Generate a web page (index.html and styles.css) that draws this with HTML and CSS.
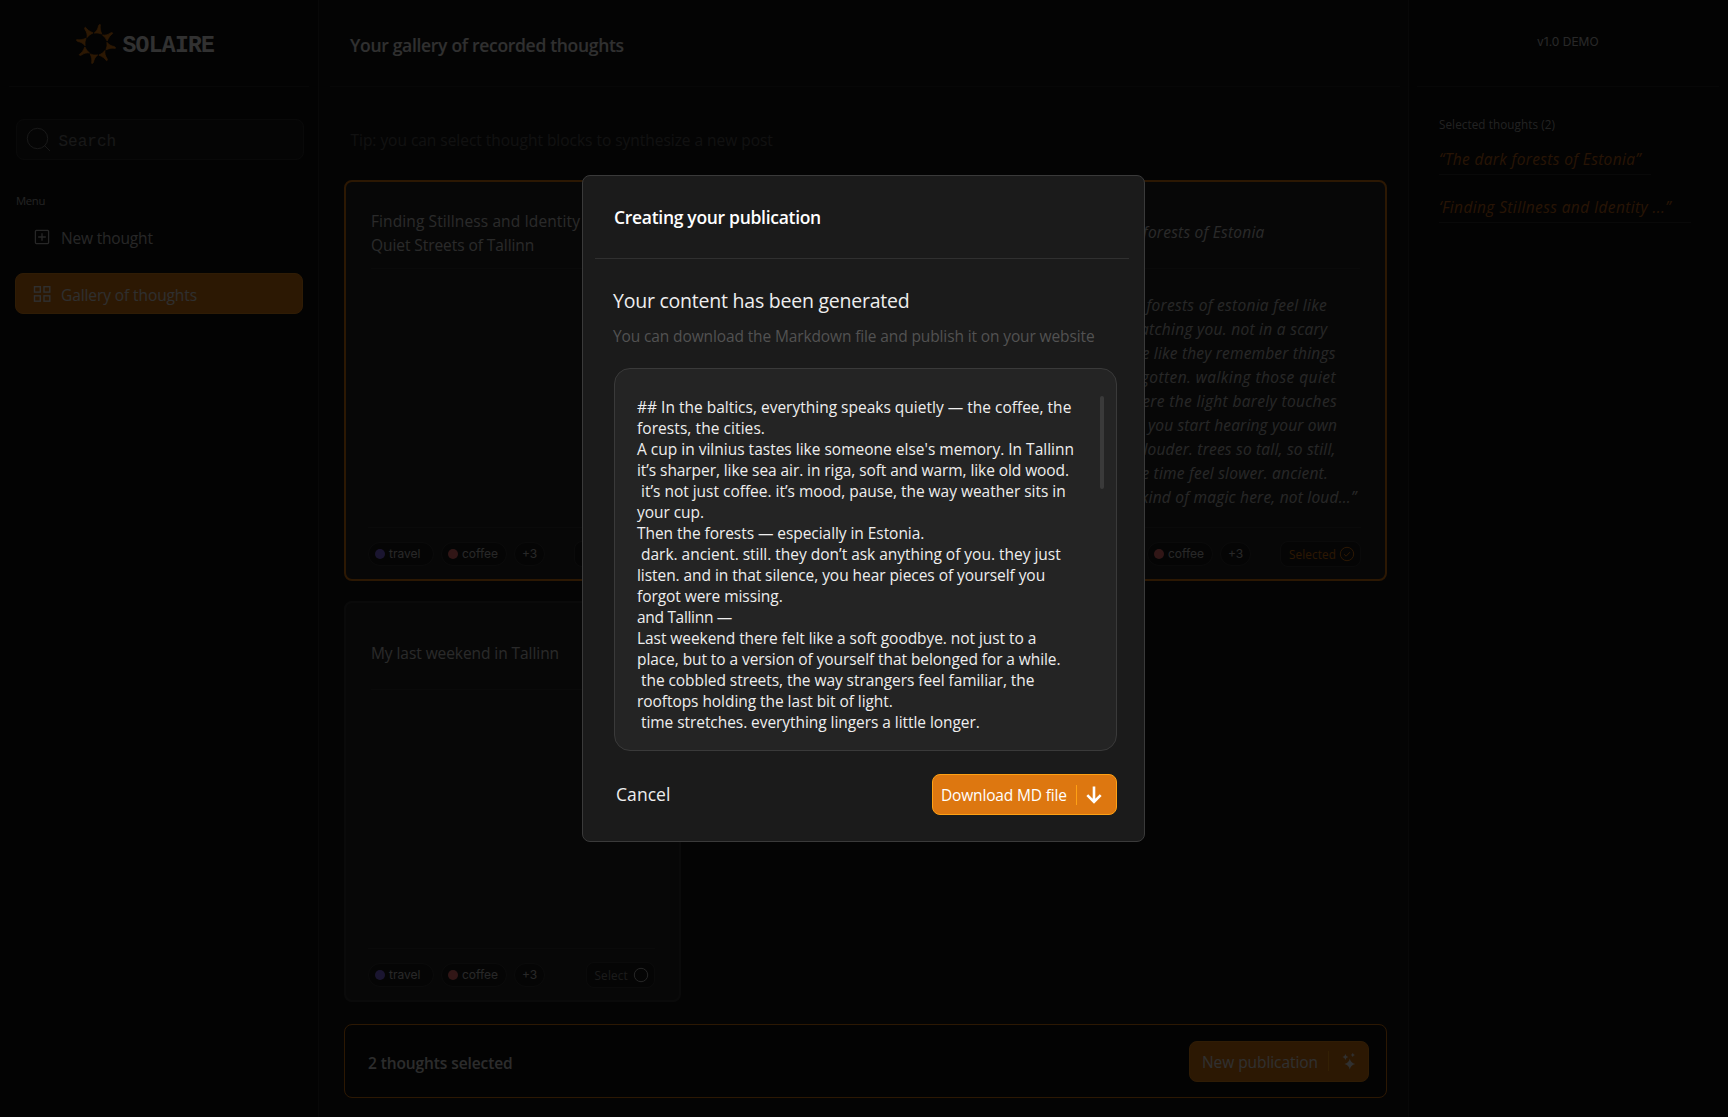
FILE: index.html
```html
<!DOCTYPE html>
<html lang="en">
<head>
<meta charset="utf-8">
<title>Solaire – Gallery of thoughts</title>
<link rel="stylesheet" href="styles.css">
</head>
<body>
<div class="app">
  <aside class="sidebar">
    <div class="brand">
      <svg class="sun" width="42" height="42" viewBox="-21 -21 42 42">
        <defs><path id="ray" d="M-1.8-10.9C.6-12.6 2-15.2 2.5-18.2Q3.4-20.2 4.4-19.3C3.8-16 4.4-13.6 5.8-9.9Q2-11.6-1.8-10.9Z"/></defs>
        <use href="#ray"/><use href="#ray" transform="rotate(45)"/><use href="#ray" transform="rotate(90)"/><use href="#ray" transform="rotate(135)"/><use href="#ray" transform="rotate(180)"/><use href="#ray" transform="rotate(225)"/><use href="#ray" transform="rotate(270)"/><use href="#ray" transform="rotate(315)"/>
      </svg>
      <span class="brand-name">SOLAIRE</span>
    </div>
    <div class="search">
      <svg width="26" height="26" viewBox="0 0 26 26" fill="none" stroke="currentColor"><circle cx="11.5" cy="11.5" r="10.2"/><path d="M18.2 18.2L24 24"/></svg>
      <span>Search</span>
    </div>
    <div class="menu-label">Menu</div>
    <nav class="menu">
      <a class="menu-item"><svg width="18" height="18" viewBox="0 0 18 18" fill="none" stroke="currentColor" stroke-width="1.3"><rect x="2.4" y="2.4" width="13.2" height="13.2" rx="1"/><path d="M9 5.2v7.6M5.2 9h7.6"/></svg><span>New thought</span></a>
      <a class="menu-item active"><svg width="18" height="18" viewBox="0 0 18 18" fill="none" stroke="currentColor" stroke-width="1.4"><rect x="1.5" y="1.7" width="5.8" height="5.4"/><rect x="11" y="1.7" width="5.8" height="5.4"/><rect x="1.5" y="10.8" width="5.8" height="5.4"/><rect x="11" y="10.8" width="5.8" height="5.4"/></svg><span>Gallery of thoughts</span></a>
    </nav>
  </aside>

  <main class="main">
    <header class="topbar"><h1>Your gallery of recorded thoughts</h1></header>
    <p class="tip">Tip: you can select thought blocks to synthesize a new post</p>
    <section class="gallery">
      <article class="card selected">
        <h2 class="card-title"><span class="wide">Finding Stillness and Identity in the</span><span>Quiet Streets of Tallinn</span></h2>
        <div class="card-body"></div>
        <footer class="card-foot">
          <span class="tag"><i class="dot travel"></i><em>travel</em></span><span class="tag"><i class="dot coffee"></i><em>coffee</em></span><span class="tag more">+3</span>
          <span class="pick"><em>Selected</em><svg width="16" height="16" viewBox="0 0 16 16" fill="none" stroke="currentColor"><circle cx="8" cy="8" r="6.7"/><path d="M5 8.2l2.1 2 3.8-4"/></svg></span>
        </footer>
      </article>
      <article class="card selected last">
        <h2 class="card-title italic"><span>The dark forests of Estonia</span></h2>
        <div class="card-body italic"><span>“the dark forests of estonia feel like</span><span>they’re watching you. not in a scary</span><span>way. more like they remember things</span><span>we’ve forgotten. walking those quiet</span><span>paths where the light barely touches</span><span>the moss. you start hearing your own</span><span>thoughts louder. trees so tall, so still,</span><span>they make time feel slower. ancient.</span><span>there’s a kind of magic here, not loud...”</span></div>
        <footer class="card-foot">
          <span class="tag"><i class="dot travel"></i><em>travel</em></span><span class="tag"><i class="dot coffee"></i><em>coffee</em></span><span class="tag more">+3</span>
          <span class="pick"><em>Selected</em><svg width="16" height="16" viewBox="0 0 16 16" fill="none" stroke="currentColor"><circle cx="8" cy="8" r="6.7"/><path d="M5 8.2l2.1 2 3.8-4"/></svg></span>
        </footer>
      </article>
      <article class="card">
        <h2 class="card-title single"><span>My last weekend in Tallinn</span></h2>
        <div class="card-body"></div>
        <footer class="card-foot">
          <span class="tag"><i class="dot travel"></i><em>travel</em></span><span class="tag"><i class="dot coffee"></i><em>coffee</em></span><span class="tag more">+3</span>
          <span class="pick"><em>Select</em><svg width="16" height="16" viewBox="0 0 16 16" fill="none" stroke="currentColor"><circle cx="8" cy="8" r="6.7"/></svg></span>
        </footer>
      </article>
    </section>
    <div class="selection-bar">
      <strong>2 thoughts selected</strong>
      <button class="publish"><span>New publication</span><i class="split"></i><svg width="16" height="18" viewBox="0 0 16 18" fill="currentColor"><path d="M8.8 6.6Q9.6 11 14.2 12Q9.6 13 8.8 17.6Q8 13 3.4 12Q8 11 8.8 6.6ZM4.4 2Q4.9 4.6 7.3 5Q4.9 5.5 4.4 8Q3.9 5.5 1.5 5Q3.9 4.6 4.4 2ZM11.8.8Q12.1 2.7 13.9 3Q12.1 3.3 11.8 5.2Q11.5 3.3 9.7 3Q11.5 2.7 11.8.8Z"/></svg></button>
    </div>
  </main>

  <aside class="panel">
    <div class="version">v1.0 DEMO</div>
    <div class="panel-body">
      <p class="panel-label">Selected thoughts (2)</p>
      <a class="picked first">“The dark forests of Estonia”</a>
      <a class="picked">‘Finding Stillness and Identity ...”</a>
    </div>
  </aside>
</div>

<div class="overlay">
  <div class="modal" role="dialog">
    <header class="modal-head"><h2>Creating your publication</h2></header>
    <div class="modal-body">
      <h3>Your content has been generated</h3>
      <p class="hint">You can download the Markdown file and publish it on your website</p>
      <div class="output">
        <div class="text"><span>## In the baltics, everything speaks quietly — the coffee, the</span><span>forests, the cities.</span><span>A cup in vilnius tastes like someone else's memory. In Tallinn</span><span>it’s sharper, like sea air. in riga, soft and warm, like old wood.</span><span> it’s not just coffee. it’s mood, pause, the way weather sits in</span><span>your cup.</span><span>Then the forests — especially in Estonia.</span><span> dark. ancient. still. they don’t ask anything of you. they just</span><span>listen. and in that silence, you hear pieces of yourself you</span><span>forgot were missing.</span><span>and Tallinn —</span><span>Last weekend there felt like a soft goodbye. not just to a</span><span>place, but to a version of yourself that belonged for a while.</span><span> the cobbled streets, the way strangers feel familiar, the</span><span>rooftops holding the last bit of light.</span><span> time stretches. everything lingers a little longer.</span></div>
        <i class="scroll"></i>
      </div>
      <div class="actions">
        <button class="cancel">Cancel</button>
        <button class="download"><span>Download MD file</span><i class="split"></i><svg width="18" height="20" viewBox="0 0 18 20" fill="none" stroke="currentColor" stroke-width="2.6"><path d="M9 1.5v15M2.3 10.2L9 17l6.7-6.8"/></svg></button>
      </div>
    </div>
  </div>
</div>
</body>
</html>
```
FILE: styles.css
```css
* { box-sizing: border-box; margin: 0; padding: 0; }
body { width: 1728px; height: 1117px; overflow: hidden; background: #000; font: 15.5px/24px "Open Sans", "Noto Sans", sans-serif; color: #eee; }
span, em, h1, h2, h3, p, a { white-space: pre; }
em, i { font-style: normal; }
h1, h2, h3 { font-weight: 400; }
button { border: 0; background: none; font: inherit; color: inherit; }
.app { display: flex; height: 1117px; background: #171717; }

/* Sidebar */
.sidebar { width: 319px; background: #0f0f0f; border-right: 1px solid #2a2a2a; }
.brand { display: flex; align-items: center; height: 87px; margin: 0 9px; padding: 1px 0 0 65.5px; border-bottom: 1px solid #242424; color: #dd7710; gap: 6px; }
.sun { fill: currentColor; stroke: currentColor; stroke-width: .7; stroke-linejoin: round; }
.brand-name { color: #f4f4f4; font: 700 23px/30px "Liberation Mono", monospace; letter-spacing: -.7px; padding-top: 4px; }
.search { display: flex; align-items: center; width: 288px; height: 41px; margin: 32px 0 0 16px; padding-left: 9px; gap: 6.5px; border: 1px solid #303030; border-radius: 8px; background: #1d1d1d; color: #777; font: 16px/24px "Liberation Mono", monospace; }
.search span { padding-top: 4px; }
.menu-label { margin: 30px 0 0 16px; font-size: 11.3px; line-height: 22px; color: #b0b0b0; letter-spacing: -.35px; }
.menu { display: grid; gap: 16px; margin: 4px 0 0 15px; }
.menu-item { display: flex; align-items: center; gap: 10px; width: 288px; height: 41px; padding-left: 18px; border-radius: 8px; color: #c0c0c0; letter-spacing: -.18px; }
.menu-item span { padding-top: 2px; }
.menu-item.active { background: #dd7710; border: 1px solid #ea8a1c; padding-left: 17px; color: #e8e8e8; letter-spacing: -.095px; }

/* Gallery */
.main { width: 1089px; display: flex; flex-direction: column; }
.topbar { height: 87px; margin: 0 8px 0 11px; padding: 32px 0 0 20px; border-bottom: 1px solid #242424; }
.topbar h1 { font-size: 17.5px; line-height: 26px; font-weight: 600; letter-spacing: -.31px; }
.tip { margin: 41px 0 28px 31.5px; color: #555; letter-spacing: -.03px; }
.gallery { display: grid; grid-template-columns: repeat(3, 337px); grid-auto-rows: 401px; gap: 20px 16px; margin-left: 25px; }
.card { display: flex; flex-direction: column; border: 2px solid #353535; border-radius: 8px; background: #242424; padding: 0 25px; }
.card.selected { border-color: #dd7710; }
.card.last { grid-column: 3; }
.card-title { height: 87px; border-bottom: 1px solid #323232; display: flex; flex-direction: column; justify-content: center; align-items: flex-start; font-size: 15.5px; letter-spacing: -.07px; color: #d0d0d0; padding-top: 16px; }
.card-title.single { padding-top: 14px; }
.card-title .wide { letter-spacing: .103px; }
.italic { font-style: italic; }
.card-title.italic { letter-spacing: .223px; padding-top: 13px; }
.card-body { height: 258px; padding-top: 24px; display: flex; flex-direction: column; align-items: flex-start; color: #c4c4c4; letter-spacing: .21px; }
.card-body span:nth-child(-n+2) { letter-spacing: .285px; }
.card-body span:nth-child(3) { letter-spacing: .183px; }
.card-body span:nth-child(4) { letter-spacing: .427px; }
.card-body span:nth-child(5) { letter-spacing: .345px; }
.card-body span:nth-child(6) { letter-spacing: .164px; }
.card-foot { display: flex; align-items: center; margin: 0 -1px 0 -3px; padding-top: 13px; border-top: 1px solid #323232; font: 12px/16px Inter, sans-serif; color: #c8c8c8; }
.tag { display: flex; align-items: center; width: 66px; height: 24px; margin-right: 7px; padding-left: 6px; gap: 4px; border: 1px solid #363636; border-radius: 12px; background: #1b1b1b; }
.tag.more { width: 31px; padding-left: 7px; }
.dot { width: 10px; height: 10px; border-radius: 50%; }
.travel { background: #8468f0; }
.coffee { background: #f27070; }
.pick { display: flex; align-items: center; gap: 5px; height: 26px; margin-left: auto; padding: 0 5px 0 8px; border: 1px solid #363636; border-radius: 8px; background: #1b1b1b; color: #888; font: 11.7px/16px "Open Sans", sans-serif; letter-spacing: .208px; }
.pick svg { color: #bbb; }
.selected .pick, .selected .pick svg { color: #dd7710; }
.selected .pick { gap: 3px; letter-spacing: .129px; }

.selection-bar { display: flex; align-items: center; justify-content: space-between; width: 1043px; height: 74px; margin: 22px 0 0 25px; padding: 0 17px 0 23px; border: 1px solid #dd7710; border-radius: 8px; background: #111; }
.selection-bar strong { font-weight: 600; color: #ddd; letter-spacing: -.1px; padding-top: 4px; }
.publish { display: flex; align-items: center; width: 180px; height: 41px; padding-left: 12px; border: 1px solid #ea8a1c; border-radius: 8px; background: #dd7710; letter-spacing: -.07px; }
.publish span { padding-top: 1px; }
.split { width: 1px; height: 20px; background: #ffa114; }
.publish .split { margin: 0 12px 0 10px; }

/* Selected thoughts */
.panel { width: 320px; background: #0f0f0f; border-left: 1px solid #2a2a2a; }
.version { height: 87px; margin: 0 9px 0 8px; padding: 33px 0 0 120px; border-bottom: 1px solid #242424; font: 12px/18px Inter, sans-serif; color: #c8c8c8; }
.panel-body { padding: 28px 0 0 30px; display: flex; flex-direction: column; align-items: flex-start; }
.panel-label { font-size: 11.7px; line-height: 18px; color: #aaa; letter-spacing: .076px; }
.picked { width: 252px; height: 32px; margin-bottom: 16px; padding-top: 4px; border-bottom: 1px solid #303030; font-style: italic; color: #c4661a; letter-spacing: .382px; }
.picked.first { width: 212px; margin-top: 10px; letter-spacing: .337px; }

/* Publication dialog */
.overlay { position: absolute; inset: 0; background: rgba(0, 0, 0, .8); padding: 175px 0 0 582px; }
.modal { width: 563px; height: 667px; border: 1px solid #3a3a3a; border-radius: 8px; background: #1b1b1b; }
.modal-head { height: 83px; margin: 0 15px 0 12px; padding: 28px 0 0 19px; border-bottom: 1px solid #303030; }
.modal-head h2 { font-size: 17.5px; line-height: 26px; font-weight: 600; color: #fff; letter-spacing: -.3px; }
.modal-body { padding: 27px 27px 0 30px; }
.modal-body h3 { font-size: 19.5px; line-height: 30px; letter-spacing: -.23px; }
.hint { margin: 8px 0 20px; color: #525252; letter-spacing: -.124px; }
.output { display: flex; justify-content: space-between; height: 383px; margin-left: 1px; padding: 27px 12px 0 22px; border: 1px solid #3a3a3a; border-radius: 16px; background: #242424; line-height: 21px; }
.text { display: flex; flex-direction: column; align-items: flex-start; padding-top: 1px; letter-spacing: -.06px; }
.text span:nth-child(1), .text span:nth-child(3) { letter-spacing: 0; }
.text span:nth-child(2) { letter-spacing: .069px; }
.text span:nth-child(4), .text span:nth-child(13) { letter-spacing: -.078px; }
.text span:nth-child(5), .text span:nth-child(8) { letter-spacing: -.018px; }
.text span:nth-child(11) { letter-spacing: -.313px; }
.scroll { width: 4px; height: 93px; border-radius: 2px; background: #3a3a3a; }
.actions { display: flex; justify-content: space-between; margin-top: 23px; }
.cancel { padding: 0 0 2px 3px; font-size: 17.5px; letter-spacing: .065px; }
.download { display: flex; align-items: center; width: 185px; height: 41px; padding-left: 8px; border: 1px solid #ffa114; border-radius: 8px; background: #dd7710; color: #fff; letter-spacing: -.16px; }
.download span { padding-top: 1px; }
.download .split { margin: 0 8px 0 9px; }
```
